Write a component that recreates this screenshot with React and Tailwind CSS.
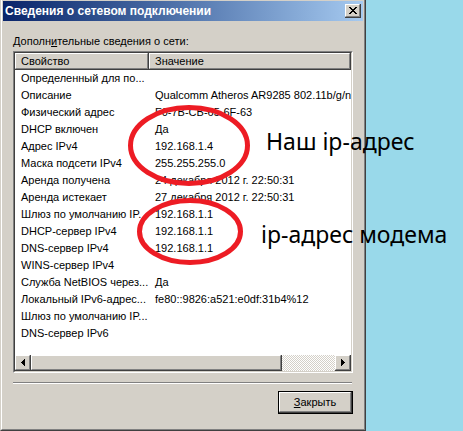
const rows = [
  ['Определенный для по...', ''],
  ['Описание', 'Qualcomm Atheros AR9285 802.11b/g/n'],
  ['Физический адрес', 'F0-7B-CB-65-6F-63'],
  ['DHCP включен', 'Да'],
  ['Адрес IPv4', '192.168.1.4'],
  ['Маска подсети IPv4', '255.255.255.0'],
  ['Аренда получена', '24 декабря 2012 г. 22:50:31'],
  ['Аренда истекает', '27 декабря 2012 г. 22:50:31'],
  ['Шлюз по умолчанию IP...', '192.168.1.1'],
  ['DHCP-сервер IPv4', '192.168.1.1'],
  ['DNS-сервер IPv4', '192.168.1.1'],
  ['WINS-сервер IPv4', ''],
  ['Служба NetBIOS через...', 'Да'],
  ['Локальный IPv6-адрес...', 'fe80::9826:a521:e0df:31b4%12'],
  ['Шлюз по умолчанию IP...', ''],
  ['DNS-сервер IPv6', ''],
];

function Raised({ className = '', children }) {
  return (
    <div className={`border-r border-b border-[#404040] ${className}`}>
      <div className="h-full border-t border-l border-t-white border-l-white border-r border-b border-r-[#808080] border-b-[#808080] bg-[#d4d0c8] flex items-center justify-center">
        {children}
      </div>
    </div>
  );
}

function CloseGlyph() {
  return (
    <svg width="8" height="7" viewBox="0 0 8 7" shapeRendering="crispEdges">
      <path fill="#000" d="M0 0h2v1H0zM6 0h2v1H6zM1 1h2v1H1zM5 1h2v1H5zM2 2h4v1H2zM3 3h2v1H3zM2 4h4v1H2zM1 5h2v1H1zM5 5h2v1H5zM0 6h2v1H0zM6 6h2v1H6z" />
    </svg>
  );
}

export default function App() {
  return (
    <div className="relative w-[463px] h-[431px] bg-[#99d9ea] overflow-hidden font-['Liberation_Sans',Arial,sans-serif]">
      {/* window */}
      <div className="w-[366px] h-[431px] border-l border-l-[#d4d0c8] border-r border-b border-r-[#404040] border-b-[#404040]">
        <div className="h-full border-l border-l-white border-r border-b border-r-[#808080] border-b-[#808080] bg-[#d4d0c8] p-[1px] flex flex-col">
          {/* title bar */}
          <div className="h-[20px] flex items-center pl-[2px] pr-[2px] bg-gradient-to-r from-[#0a246a] to-[#a6caf0]">
            <span className="flex-1 text-white font-bold text-[12px] leading-none">Сведения о сетевом подключении</span>
            <Raised className="w-[16px] h-[14px]">
              <CloseGlyph />
            </Raised>
          </div>

          {/* body */}
          <div className="flex-1 flex flex-col pl-[10px] pr-[10px]">
            <div className="mt-[13px] h-[14px] text-[11px] leading-[14px] text-black">
              Дополн<span className="underline">и</span>тельные сведения о сети:
            </div>

            {/* list */}
            <div className="mt-[3px] h-[322px] border-t border-l border-t-[#808080] border-l-[#808080] border-r border-b border-r-white border-b-white">
              <div className="h-full border-t border-l border-t-[#404040] border-l-[#404040] border-r border-b border-r-[#d4d0c8] border-b-[#d4d0c8] bg-white flex flex-col overflow-hidden">
                <div className="h-[17px] flex shrink-0">
                  <div className="w-[134px] border-r border-b border-[#404040]">
                    <div className="h-full border-t border-l border-white border-r border-b border-r-[#808080] border-b-[#808080] bg-[#d4d0c8] pl-[5px] text-[11px] leading-[14px] text-black whitespace-nowrap">
                      Свойство
                    </div>
                  </div>
                  <div className="flex-1 border-r border-b border-[#404040]">
                    <div className="h-full border-t border-l border-white border-r border-b border-r-[#808080] border-b-[#808080] bg-[#d4d0c8] pl-[5px] text-[11px] leading-[14px] text-black whitespace-nowrap">
                      Значение
                    </div>
                  </div>
                </div>

                <div className="flex flex-col">
                  {rows.map(([name, value], i) => (
                    <div key={i} className="h-[17px] flex items-center text-[11px] text-black whitespace-nowrap">
                      <div className="w-[134px] shrink-0 pl-[6px] overflow-hidden">{name}</div>
                      <div className="pl-[6px]">{value}</div>
                    </div>
                  ))}
                </div>

                <div className="flex-1" />

                {/* horizontal scrollbar */}
                <div className="h-[16px] flex shrink-0 bg-[#d4d0c8]">
                  <Raised className="w-[16px] h-[16px]">
                    <svg width="4" height="7" viewBox="0 0 4 7" shapeRendering="crispEdges">
                      <path fill="#000" d="M3 0h1v7H3zM2 1h1v5H2zM1 2h1v3H1zM0 3h1v1H0z" />
                    </svg>
                  </Raised>
                  <Raised className="w-[251px] h-[16px]" />
                  <div className="flex-1 bg-[repeating-conic-gradient(#d4d0c8_0_25%,#ffffff_0_50%)] bg-size-[2px_2px]" />
                  <Raised className="w-[16px] h-[16px]">
                    <svg width="4" height="7" viewBox="0 0 4 7" shapeRendering="crispEdges">
                      <path fill="#000" d="M0 0h1v7H0zM1 1h1v5H1zM2 2h1v3H2zM3 3h1v1H3z" />
                    </svg>
                  </Raised>
                </div>
              </div>
            </div>

            {/* separator */}
            <div className="mt-[9px] h-[2px] border-t border-t-[#808080] border-b border-b-white mr-[1px]" />

            <div className="mt-[7px] flex justify-end">
              <div className="w-[75px] h-[23px] border border-black">
                <Raised className="h-full">
                  <span className="text-[11px] text-black leading-none">
                    <span className="underline">З</span>акрыть
                  </span>
                </Raised>
              </div>
            </div>
          </div>
        </div>
      </div>

      {/* annotations */}
      <svg className="absolute left-0 top-0 pointer-events-none" width="463" height="431">
        <ellipse cx="189" cy="145.5" rx="58.5" ry="38" fill="none" stroke="#ed1c24" strokeWidth="5" />
        <ellipse cx="190" cy="231.5" rx="50.5" ry="31" fill="none" stroke="#ed1c24" strokeWidth="5" />
      </svg>
      <div className="absolute left-[266px] top-[130px] text-[23px] leading-none text-black whitespace-nowrap font-['Noto_Sans',sans-serif]">
        Наш ip-адрес
      </div>
      <div className="absolute left-[261px] top-[223px] text-[23px] leading-none text-black whitespace-nowrap font-['Noto_Sans',sans-serif]">
        ip-адрес модема
      </div>
    </div>
  );
}
